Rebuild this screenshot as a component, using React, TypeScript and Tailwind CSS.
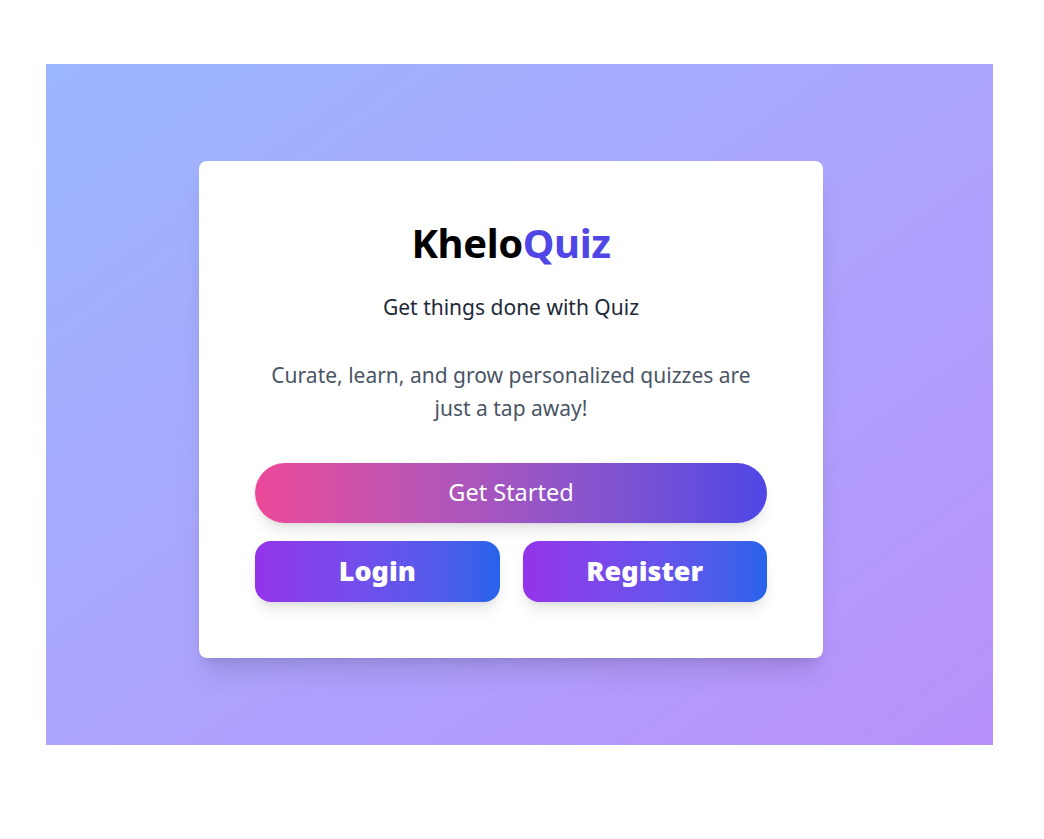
import React from "react";

export default function App() {
  return (
    <div
      className="w-[1044px] h-[839px] bg-white pt-[64px] pl-[46px]"
      style={{ fontFamily: '"Noto Sans", "Open Sans", sans-serif' }}
    >
      <div className="w-[947px] h-[681px] bg-linear-to-br from-[#9ab7fd] to-[#b890fb] pt-[97px] pl-[153px]">
        <div className="w-[624px] h-[497px] bg-white rounded-lg shadow-xl px-[56px] pt-[58px] flex flex-col items-center text-center">
          <h1 className="text-[40px] leading-[48px] font-bold text-black tracking-[-0.4px]">
            Khelo<span className="text-[#4f46e5]">Quiz</span>
          </h1>
          <p className="mt-[26px] text-[21px] leading-[28px] text-gray-800">
            Get things done with Quiz
          </p>
          <p className="mt-[38px] text-[21px] leading-[33px] text-gray-600 max-w-[490px]">
            Curate, learn, and grow personalized quizzes are just a tap away!
          </p>
          <button className="mt-[38px] w-full h-[60px] shrink-0 rounded-full bg-linear-to-r from-[#ec4899] to-[#4f46e5] text-white text-[23.5px] shadow-lg">
            Get Started
          </button>
          <div className="mt-[18px] w-full grid grid-cols-2 gap-[23px]">
            <button className="h-[61px] rounded-2xl bg-linear-to-r from-[#9333ea] to-[#2563eb] text-white text-[27px] font-black shadow-lg">
              Login
            </button>
            <button className="h-[61px] rounded-2xl bg-linear-to-r from-[#9333ea] to-[#2563eb] text-white text-[27px] font-black shadow-lg">
              Register
            </button>
          </div>
        </div>
      </div>
    </div>
  );
}
